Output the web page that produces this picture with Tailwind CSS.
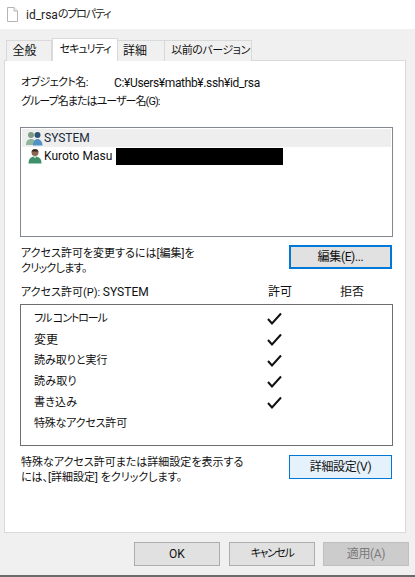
<!DOCTYPE html>
<html lang="ja">
<head>
    <meta charset="UTF-8">
    <title>id_rsaのプロパティ</title>
    <script src="https://cdn.jsdelivr.net/npm/@tailwindcss/browser@4"></script>
</head>
<body class="h-[577px] w-[415px] overflow-hidden bg-[#f0f0f0] text-[11px] leading-[16px] text-[#111] [font-family:'Roboto','Noto_Sans_CJK_JP',sans-serif] [font-feature-settings:'palt']">

    <!-- Title bar -->
    <div class="flex h-[29px] items-center bg-white pl-[7px]">
        <svg width="11" height="15" viewBox="0 0 11 15" class="mt-[-1px]">
            <path d="M.5.5h6.5l3.500 3.500v10.500h-10z" fill="#fff" stroke="#b5b5b5"/>
            <path d="M7 .5v3.500h3.500" fill="#f0f0f0" stroke="#b5b5b5"/>
        </svg>
        <span class="ml-[8px] text-[12px] text-[#222]">id_rsa</span><span class="tracking-[-1.2px] text-[#222]">のプロパティ</span>
    </div>

    <!-- Tabs -->
    <div class="flex h-[31px] items-end whitespace-nowrap pl-[6px]">
        <div class="relative z-0 mb-[-1px] flex h-[21px] w-[46px] items-center justify-center border border-b-0 border-[#d9d9d9] bg-[#f0f0f0] pr-[9px] text-[12px]">全般</div>
        <div class="relative z-10 mb-[-1px] flex h-[23px] w-[66px] items-center justify-center border border-b-0 border-[#d9d9d9] bg-white tracking-[-1px]">セキュリティ</div>
        <div class="relative z-0 mb-[-1px] flex h-[21px] w-[47px] items-center justify-center border border-b-0 border-l-0 border-[#d9d9d9] bg-[#f0f0f0] pr-[12px] text-[12px]">詳細</div>
        <div class="relative z-0 mb-[-1px] flex h-[21px] w-[87px] items-center justify-center border border-b-0 border-l-0 border-[#d9d9d9] bg-[#f0f0f0] pl-[5px] tracking-[-0.45px]">以前のバージョン</div>
    </div>

    <!-- Security panel -->
    <div class="ml-[4px] h-[473px] w-[402px] border border-[#d9d9d9] bg-white pl-[15px] pr-[13px] pt-[14px]">
        <div class="flex h-[16px] items-center pl-px">
            <span class="w-[93px] tracking-[-0.6px]">オブジェクト名:</span>
            <span class="text-[12px] tracking-[-0.35px]">C:¥Users¥mathb¥.ssh¥id_rsa</span>
        </div>
        <div class="mt-[3px] h-[16px] pl-px tracking-[-0.95px]">グループ名またはユーザー名(G):</div>

        <!-- Users list -->
        <div class="mt-[17px] h-[110px] w-[373px] border border-[#828790] p-px">
            <div class="flex h-[18px] items-center bg-[#eeeeee] pl-[4px]">
                <svg width="17" height="15" viewBox="0 0 17 15">
                    <circle cx="5" cy="4" r="3" fill="#7e9c86"/>
                    <path d="M0 14c0-4 2-6 5-6s5 2 5 6z" fill="#8fb59a"/>
                    <circle cx="11.500" cy="4" r="3" fill="#2c5673"/>
                    <path d="M7 14.500c0-4 2-6.500 4.500-6.500s5 2.500 5 6.500z" fill="#4f93c7"/>
                </svg>
                <span class="ml-px text-[12px] text-[#1a2a3a]">SYSTEM</span>
            </div>
            <div class="flex h-[18px] items-center pl-[6px]">
                <svg width="14" height="16" viewBox="0 0 14 16">
                    <circle cx="7" cy="4.500" r="3.500" fill="#8a6650"/>
                    <path d="M3.500 3.500c1-3 6-3 7 0z" fill="#33251c"/>
                    <path d="M.5 15.500c0-5 2.500-7 6.500-7s6.500 2 6.500 7z" fill="#3f8f6b"/>
                    <path d="M5.500 8.500l1.500 2 1.500-2z" fill="#d9e8df"/>
                </svg>
                <span class="ml-[2px] w-[72px] whitespace-nowrap text-[12px]">Kuroto Masu</span>
                <div class="h-[17px] w-[167px] bg-black"></div>
            </div>
        </div>

        <!-- Edit row -->
        <div class="mt-[8px] flex h-[24px] w-[372px] justify-between">
            <p class="mt-px pl-px leading-[15px]">アクセス許可を変更するには[編集]を<br><span class="tracking-[-0.7px]">クリックします。</span></p>
            <button class="h-[24px] w-[103px] border-2 border-[#0078d7] bg-[#e1e1e1] text-center text-[12px] tracking-[-0.35px]">編集(E)...</button>
        </div>

        <!-- Permissions header -->
        <div class="mt-[15px] flex h-[16px] w-[373px] items-center pl-px">
            <span class="w-[247px]">アクセス許可(P): <span class="text-[12px]">SYSTEM</span></span>
            <span class="w-[72px] text-[12px]">許可</span>
            <span class="text-[12px]">拒否</span>
        </div>

        <!-- Permissions list -->
        <div class="mt-[4px] h-[142px] w-[373px] border border-[#6f6f6f] pl-[13px] pt-[3px]">
            <div class="flex h-[21px] items-center"><span class="w-[233px] tracking-[-1.1px]">フル コントロール</span><svg width="15" height="13" viewBox="0 0 15 13"><path d="M1 7l4 4.500 9-10" fill="none" stroke="#111" stroke-width="2"/></svg></div>
            <div class="flex h-[21px] items-center"><span class="w-[233px] text-[12px]">変更</span><svg width="15" height="13" viewBox="0 0 15 13"><path d="M1 7l4 4.500 9-10" fill="none" stroke="#111" stroke-width="2"/></svg></div>
            <div class="flex h-[21px] items-center"><span class="w-[233px]">読み取りと実行</span><svg width="15" height="13" viewBox="0 0 15 13"><path d="M1 7l4 4.500 9-10" fill="none" stroke="#111" stroke-width="2"/></svg></div>
            <div class="flex h-[21px] items-center"><span class="w-[233px] tracking-[0.2px]">読み取り</span><svg width="15" height="13" viewBox="0 0 15 13"><path d="M1 7l4 4.500 9-10" fill="none" stroke="#111" stroke-width="2"/></svg></div>
            <div class="flex h-[21px] items-center"><span class="w-[233px] tracking-[0.2px]">書き込み</span><svg width="15" height="13" viewBox="0 0 15 13"><path d="M1 7l4 4.500 9-10" fill="none" stroke="#111" stroke-width="2"/></svg></div>
            <div class="flex h-[21px] items-center"><span class="w-[233px] tracking-[-0.2px]">特殊なアクセス許可</span></div>
        </div>

        <!-- Advanced row -->
        <div class="mt-[9px] flex h-[26px] w-[372px] justify-between">
            <p class="pl-px leading-[15px]">特殊なアクセス許可または詳細設定を表示する<br>には、[詳細設定] をクリックします。</p>
            <button class="h-[24px] w-[103px] border border-[#0078d7] bg-[#e5f1fb] text-center text-[12px] tracking-[-0.35px]">詳細設定(V)</button>
        </div>
    </div>

    <!-- Dialog buttons -->
    <div class="flex h-[42px] items-start gap-[9px] pl-[134px] pt-[9px]">
        <button class="h-[24px] w-[86px] border border-[#adadad] bg-[#e1e1e1] text-[12px]">OK</button>
        <button class="h-[24px] w-[86px] border border-[#adadad] bg-[#e1e1e1] tracking-[-1.4px]">キャンセル</button>
        <button class="ml-[-1px] h-[24px] w-[86px] border border-[#bfbfbf] bg-[#cccccc] text-[12px] tracking-[-0.35px] text-[#7a7a7a]">適用(A)</button>
    </div>
    <div class="h-[2px] bg-[#6b6b6b]"></div>
</body>
</html>
